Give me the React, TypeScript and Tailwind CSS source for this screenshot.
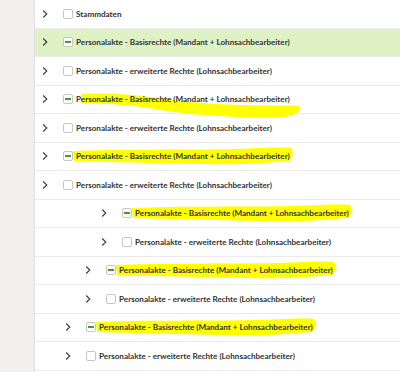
import React from "react";

type Row = {
  label: string;
  indent: number;
  partial?: boolean;
  selected?: boolean;
  mark?: "sweep" | "flat";
};

const basis = "Personalakte - Basisrechte (Mandant + Lohnsachbearbeiter)";
const erweitert = "Personalakte - erweiterte Rechte (Lohnsachbearbeiter)";

const rows: Row[] = [
  { label: "Stammdaten", indent: 0 },
  { label: basis, indent: 0, partial: true, selected: true },
  { label: erweitert, indent: 0 },
  { label: basis, indent: 0, partial: true, mark: "sweep" },
  { label: erweitert, indent: 0 },
  { label: basis, indent: 0, partial: true, mark: "flat" },
  { label: erweitert, indent: 0 },
  { label: basis, indent: 59, partial: true, mark: "flat" },
  { label: erweitert, indent: 59 },
  { label: basis, indent: 43, partial: true, mark: "flat" },
  { label: erweitert, indent: 43 },
  { label: basis, indent: 23, partial: true, mark: "flat" },
  { label: erweitert, indent: 23 },
];

function Chevron() {
  return (
    <svg width="6" height="10" viewBox="0 0 6 10" className="shrink-0">
      <path d="M1.2 1.5 L4.8 5 L1.2 8.5" fill="none" stroke="#3b3a39" strokeWidth="1.1" />
    </svg>
  );
}

function Highlight({ kind }: { kind: "sweep" | "flat" }) {
  if (kind === "sweep") {
    return (
      <svg
        className="absolute left-[5px] right-[-4px] top-[-6px] h-[30px] pointer-events-none"
        viewBox="0 0 220 30"
        preserveAspectRatio="none"
      >
        <path
          d="M0 5 C40 3 70 8 110 13 C150 17 190 16 218 17 C221 22 216 27 200 28 C150 29 110 26 80 21 C50 16 25 14 0 14 Z"
          fill="#ffff00"
        />
      </svg>
    );
  }
  return (
    <svg
      className="absolute left-[-3px] right-[-4px] top-[-5px] h-[20px] pointer-events-none"
      viewBox="0 0 220 20"
      preserveAspectRatio="none"
    >
      <path
        d="M0 4 C40 2 120 3 160 2 C190 1 208 0 218 1 C221 5 220 11 216 14 C190 16 170 18 130 17 C80 16 40 15 1 14 Z"
        fill="#ffff00"
      />
    </svg>
  );
}

function TreeRow({ row }: { row: Row }) {
  return (
    <div
      className={`h-[28.5px] border-b border-[#edebe9] flex items-center ${
        row.selected ? "bg-[#dff2c6]" : "bg-white"
      }`}
    >
      <div className="flex items-center" style={{ paddingLeft: 7 + row.indent }}>
        <Chevron />
        <div className="ml-[15px] w-[10px] h-[10px] rounded-[2px] border border-[#c8c6c4] bg-white flex items-center justify-center shrink-0">
          {row.partial && <div className="w-[6px] h-[2px] bg-[#4a9a2a]" />}
        </div>
        <span className="relative ml-[3px] text-[8.1px] font-bold text-[#323130] whitespace-nowrap leading-none">
          {row.mark && <Highlight kind={row.mark} />}
          <span className="relative">{row.label}</span>
        </span>
      </div>
    </div>
  );
}

export default function App() {
  return (
    <div
      className="w-[400px] h-[372px] flex overflow-hidden bg-white"
      style={{ fontFamily: 'Lato, "Open Sans", sans-serif' }}
    >
      <div className="w-[35px] shrink-0 bg-[#f1f0ef] border-r border-[#e1dfdd]" />
      <div className="flex-1 flex flex-col">
        {rows.map((r, i) => (
          <TreeRow key={i} row={r} />
        ))}
      </div>
    </div>
  );
}
